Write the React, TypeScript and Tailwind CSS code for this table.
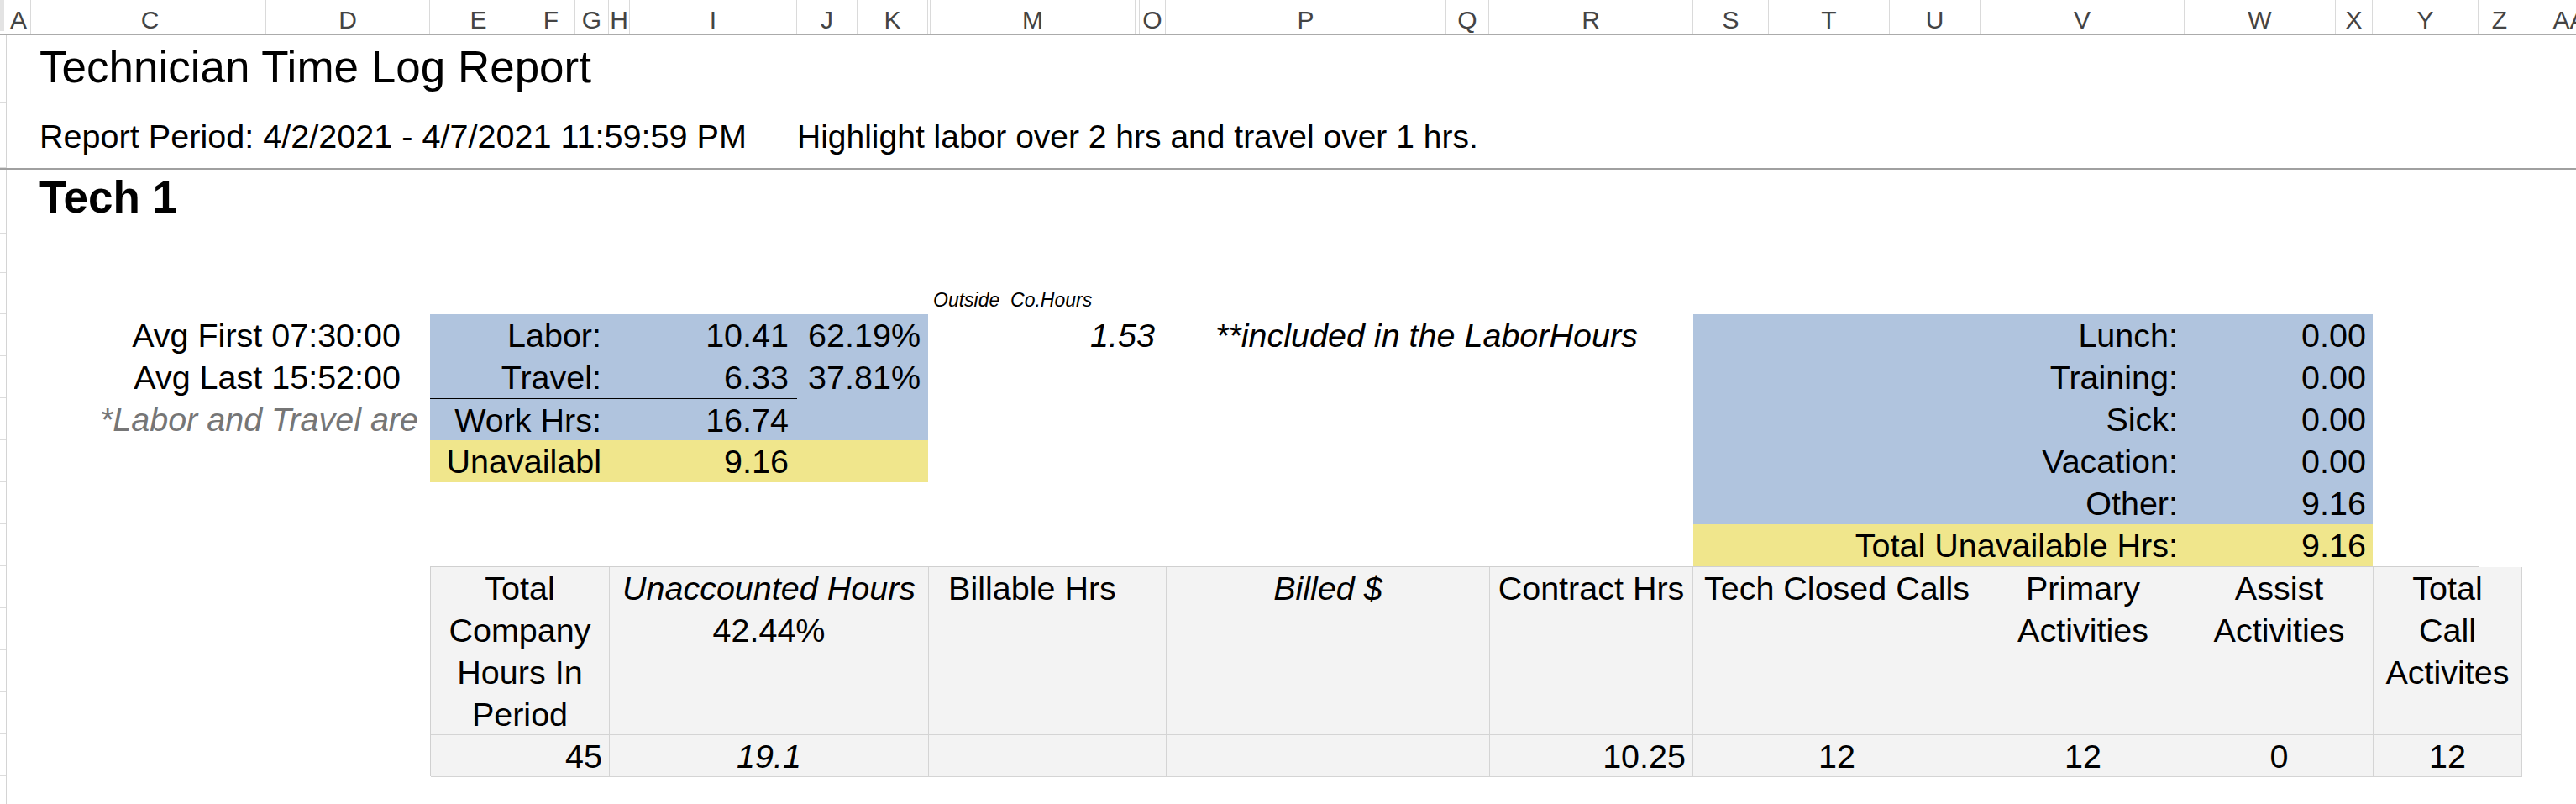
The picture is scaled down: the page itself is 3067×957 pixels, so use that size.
import React from "react";

// spreadsheet column letters; hidden columns (B, L, N) render as thin empty cells
const columns = ["A", "", "C", "D", "E", "F", "G", "H", "I", "J", "K", "", "M", "", "O", "P", "Q", "R", "S", "T", "U", "V", "W", "X", "Y", "Z", "AA"];

const sheetCols =
  "grid-cols-[29px_4px_276px_195px_116px_57px_40px_25px_199px_72px_84px_3px_244px_5px_31px_334px_51px_243px_90px_144px_108px_243px_180px_44px_126px_51px_116px]";

const blue = "bg-[#b0c4de]";
const yellow = "bg-[#f0e68c]";

function ColumnHeaders() {
  return (
    <div className="flex h-[42px] border-b border-[#ababab]">
      <div className="w-[8px] shrink-0">
        <div className="w-[5px] h-[37px] bg-[#e3e3e3]" />
      </div>
      <div className={`grid ${sheetCols}`}>
        {columns.map((c, i) => (
          <div
            key={i}
            className="flex justify-center pt-[9px] border-r border-[#dadada] text-[30px] leading-none text-[#444] overflow-hidden"
          >
            {c}
          </div>
        ))}
      </div>
    </div>
  );
}

function Gutter({ rows }: { rows: string[] }) {
  return (
    <div className="w-[8px] shrink-0 flex flex-col border-r border-[#d4d4d4]">
      {rows.map((h, i) => (
        <div key={i} className={`${h} border-b border-[#dcdcdc]`} />
      ))}
    </div>
  );
}

const laborRows = [
  { label: "Labor:", value: "10.41", pct: "62.19%", bg: blue, rule: false },
  { label: "Travel:", value: "6.33", pct: "37.81%", bg: blue, rule: false },
  { label: "Work Hrs:", value: "16.74", pct: "", bg: blue, rule: true },
  { label: "Unavailabl", value: "9.16", pct: "", bg: yellow, rule: false },
];

function LaborBlock() {
  return (
    <div className="col-[5/12] row-[4/8] flex flex-col">
      {laborRows.map((r) => (
        <div key={r.label} className={`grid grid-cols-[213px_224px_156px] h-[50px] ${r.bg}`}>
          <div className={`text-right pr-[9px] ${r.rule ? "border-t border-black" : ""}`}>{r.label}</div>
          <div className={`text-right pr-[10px] ${r.rule ? "border-t border-black" : ""}`}>{r.value}</div>
          <div className="text-right pr-[9px]">{r.pct}</div>
        </div>
      ))}
    </div>
  );
}

const unavailRows = [
  { label: "Lunch:", value: "0.00", bg: blue },
  { label: "Training:", value: "0.00", bg: blue },
  { label: "Sick:", value: "0.00", bg: blue },
  { label: "Vacation:", value: "0.00", bg: blue },
  { label: "Other:", value: "9.16", bg: blue },
  { label: "Total Unavailable Hrs:", value: "9.16", bg: yellow },
];

function UnavailableBlock() {
  return (
    <div className="col-[19/25] row-[4/10] flex flex-col">
      {unavailRows.map((r) => (
        <div key={r.label} className={`grid grid-cols-[585px_224px] h-[50px] ${r.bg}`}>
          <div className="text-right pr-[8px]">{r.label}</div>
          <div className="text-right pr-[8px]">{r.value}</div>
        </div>
      ))}
    </div>
  );
}

const cell = "bg-[#f3f3f3] border-r border-b border-[#d4d4d4] px-[6px]";

function SummaryTable() {
  return (
    <div className="col-[5/26] row-[10/12] grid grid-cols-[213px_380px_247px_36px_385px_242px_343px_243px_224px_177px] grid-rows-[200px_50px] border-l border-t border-[#d0d0d0]">
      <div className={`${cell} text-center`}>
        Total
        <br />
        Company
        <br />
        Hours In
        <br />
        Period
      </div>
      <div className={`${cell} text-center`}>
        <div className="italic">Unaccounted Hours</div>
        <div>42.44%</div>
      </div>
      <div className={`${cell} text-center`}>Billable Hrs</div>
      <div className={cell} />
      <div className={`${cell} text-center italic`}>Billed $</div>
      <div className={`${cell} text-center`}>Contract Hrs</div>
      <div className={`${cell} text-center`}>Tech Closed Calls</div>
      <div className={`${cell} text-center`}>
        Primary
        <br />
        Activities
      </div>
      <div className={`${cell} text-center`}>
        Assist
        <br />
        Activities
      </div>
      <div className={`${cell} text-center`}>
        Total
        <br />
        Call
        <br />
        Activites
      </div>

      <div className={`${cell} text-right pr-[8px]`}>45</div>
      <div className={`${cell} text-center italic`}>19.1</div>
      <div className={cell} />
      <div className={cell} />
      <div className={cell} />
      <div className={`${cell} text-right pr-[8px]`}>10.25</div>
      <div className={`${cell} text-center`}>12</div>
      <div className={`${cell} text-center`}>12</div>
      <div className={`${cell} text-center`}>0</div>
      <div className={`${cell} text-center`}>12</div>
    </div>
  );
}

export default function App() {
  return (
    <div className="w-[3067px] h-[957px] overflow-hidden bg-white text-black [font-family:'Liberation_Sans',Arial,sans-serif]">
      <ColumnHeaders />

      <div className="flex">
        <Gutter rows={["h-[81px]", "h-[77px]"]} />
        <div className={`grid ${sheetCols} grid-rows-[81px_77px] whitespace-nowrap`}>
          <div className="col-[3/12] row-[1/2] pl-[6px] pt-[11px] text-[53px] leading-none">
            Technician Time Log Report
          </div>
          <div className="col-[3/10] row-[2/3] pl-[6px] pt-[20px] text-[39.6px] leading-none">
            Report Period: 4/2/2021 - 4/7/2021 11:59:59 PM
          </div>
          <div className="col-[10/20] row-[2/3] pt-[20px] text-[39px] leading-none">
            Highlight labor over 2 hrs and travel over 1 hrs.
          </div>
        </div>
      </div>

      <div className="h-[2px] bg-[#a0a0a0]" />

      <div className="flex">
        <Gutter
          rows={[
            "h-[76px]",
            "h-[47px]",
            "h-[49px]",
            "h-[50px]",
            "h-[50px]",
            "h-[50px]",
            "h-[50px]",
            "h-[50px]",
            "h-[50px]",
            "h-[50px]",
            "h-[50px]",
            "h-[50px]",
            "h-[50px]",
            "h-[50px]",
            "h-[50px]",
          ]}
        />
        <div
          className={`grid ${sheetCols} grid-rows-[76px_47px_49px_50px_50px_50px_50px_50px_50px_200px_50px] text-[39.5px] leading-[50px] whitespace-nowrap`}
        >
          <div className="col-[3/8] row-[1/2] pl-[6px] pt-[6px] text-[53px] leading-none font-bold">Tech 1</div>

          <div className="col-[13/17] row-[3/4] flex items-end pl-[3px] pb-[5px] text-[23px] leading-none italic whitespace-pre">
            {"Outside  Co.Hours"}
          </div>

          <div className="col-[3/5] row-[4/5] text-right pr-[35px]">Avg First 07:30:00</div>
          <div className="col-[3/5] row-[5/6] text-right pr-[35px]">Avg Last 15:52:00</div>
          <div className="col-[3/5] row-[6/7] text-right pr-[14px] italic text-[#767676]">*Labor and Travel are</div>

          <LaborBlock />

          <div className="col-[13/16] row-[4/5] text-right pr-[13px] italic">1.53</div>
          <div className="col-[16/19] row-[4/5] pl-[59px] italic">**included in the LaborHours</div>

          <UnavailableBlock />

          <SummaryTable />
        </div>
      </div>
    </div>
  );
}
